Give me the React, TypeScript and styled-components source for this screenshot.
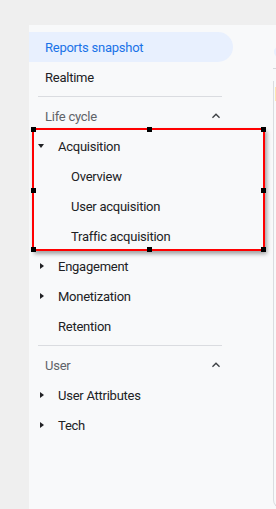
import styled, { createGlobalStyle } from "styled-components";

const GlobalStyle = createGlobalStyle`
  html, body {
    margin: 0;
    padding: 0;
    background: #efefef;
    font-family: Roboto, "Noto Sans", Arial, sans-serif;
  }
`;

type Item = { label: string; caret?: "down" | "right"; sub?: boolean };

const lifeCycle: Item[] = [
  { label: "Acquisition", caret: "down" },
  { label: "Overview", sub: true },
  { label: "User acquisition", sub: true },
  { label: "Traffic acquisition", sub: true },
  { label: "Engagement", caret: "right" },
  { label: "Monetization", caret: "right" },
  { label: "Retention" },
];

const userItems: Item[] = [
  { label: "User Attributes", caret: "right" },
  { label: "Tech", caret: "right" },
];

function Chevron() {
  return (
    <svg width="16" height="16" viewBox="0 0 24 24">
      <path d="M7.4 15.4 12 10.8l4.6 4.6L18 14l-6-6-6 6z" fill="#3c4043" />
    </svg>
  );
}

function NavRow({ item }: { item: Item }) {
  return (
    <Row>
      <CaretBox>{item.caret && <Caret $dir={item.caret} />}</CaretBox>
      <Label $sub={item.sub}>{item.label}</Label>
    </Row>
  );
}

function App() {
  return (
    <>
      <GlobalStyle />
      <Page>
        <Sidebar>
          <Snapshot>Reports snapshot</Snapshot>
          <TopItem>Realtime</TopItem>
          <Divider />
          <SectionHeader>
            <span>Life cycle</span>
            <Chevron />
          </SectionHeader>
          {lifeCycle.map((item) => (
            <NavRow key={item.label} item={item} />
          ))}
          <Divider />
          <SectionHeader>
            <span>User</span>
            <Chevron />
          </SectionHeader>
          {userItems.map((item) => (
            <NavRow key={item.label} item={item} />
          ))}
        </Sidebar>
        <Content>
          <Avatar />
          <Rule />
          <Card>
            <Chip />
          </Card>
        </Content>
      </Page>
      <Selection>
        <Handle style={{ left: -3, top: -3 }} />
        <Handle style={{ left: "50%", top: -3, marginLeft: -2 }} />
        <Handle style={{ right: -3, top: -3 }} />
        <Handle style={{ left: -3, top: "50%", marginTop: -2 }} />
        <Handle style={{ right: -3, top: "50%", marginTop: -2 }} />
        <Handle style={{ left: -3, bottom: -3 }} />
        <Handle style={{ left: "50%", bottom: -3, marginLeft: -2 }} />
        <Handle style={{ right: -3, bottom: -3 }} />
      </Selection>
    </>
  );
}

const Page = styled.div`
  margin: 25px 0 0 29px;
  height: 484px;
  background: #f8f9fa;
  display: flex;
  overflow: hidden;
`;

const Sidebar = styled.nav`
  width: 244px;
  flex-shrink: 0;
  padding-top: 7px;
  display: flex;
  flex-direction: column;
  font-size: 13px;
  letter-spacing: -0.25px;
`;

const Snapshot = styled.div`
  height: 30px;
  margin-right: 40px;
  padding-left: 16px;
  display: flex;
  align-items: center;
  background: #e8f0fe;
  border-radius: 0 15px 15px 0;
  color: #1a73e8;
`;

const TopItem = styled.div`
  height: 30px;
  padding-left: 16px;
  display: flex;
  align-items: center;
  color: #202124;
`;

const Divider = styled.div`
  height: 1px;
  background: #dadce0;
  margin: 4px 51px 4px 9px;
`;

const SectionHeader = styled.div`
  height: 30px;
  padding: 0 49px 0 16px;
  display: flex;
  align-items: center;
  justify-content: space-between;
  color: #5f6368;
`;

const Row = styled.div`
  height: 30px;
  display: flex;
  align-items: center;
  padding-left: 8px;
`;

const CaretBox = styled.div`
  width: 20px;
  display: flex;
  align-items: center;
  padding-left: 1px;
`;

const Caret = styled.span<{ $dir: "down" | "right" }>`
  width: 0;
  height: 0;
  border-style: solid;
  ${({ $dir }) =>
    $dir === "down"
      ? "border-width: 4px 3.5px 0 3.5px; border-color: #202124 transparent transparent transparent;"
      : "border-width: 3.5px 0 3.5px 4px; border-color: transparent transparent transparent #202124; margin-left: 2px;"}
`;

const Label = styled.span<{ $sub?: boolean }>`
  color: #202124;
  padding-left: ${({ $sub }) => ($sub ? "13px" : "0")};
`;

const Content = styled.div`
  flex: 1;
`;

const Avatar = styled.div`
  margin: 20px 0 0 1px;
  width: 18px;
  height: 14px;
  border-radius: 50%;
  background: #e8f0fe;
`;

const Rule = styled.div`
  margin-top: 9px;
  height: 1px;
  background: #d5d7db;
`;

const Card = styled.div`
  margin-top: 12px;
  height: 420px;
  border-left: 1px solid #dadce0;
  border-bottom: 1px solid #dadce0;
  border-radius: 0 0 0 8px;
  padding-top: 6px;
`;

const Chip = styled.div`
  width: 10px;
  height: 14px;
  margin-left: 1px;
  background: #fce8b2;
`;

const Selection = styled.div`
  position: absolute;
  left: 32px;
  top: 128px;
  width: 229px;
  height: 119px;
  border: 2px solid #f00;
  box-shadow: 2px 3px 4px rgba(0, 0, 0, 0.35);
`;

const Handle = styled.span`
  position: absolute;
  width: 5px;
  height: 5px;
  background: #000;
`;

export default App;
